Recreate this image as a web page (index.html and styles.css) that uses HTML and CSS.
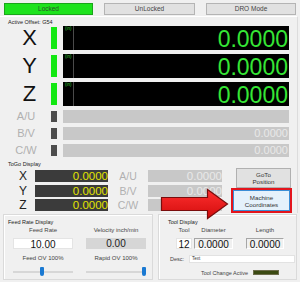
FILE: index.html
```html
<!DOCTYPE html>
<html>
<head>
<meta charset="utf-8">
<link rel="stylesheet" href="styles.css">
</head>
<body>
<div class="modes">
  <div class="mode locked">Locked</div>
  <div class="mode">UnLocked</div>
  <div class="mode">DRO Mode</div>
</div>
<div class="dro">
  <div class="cap">Active Offset: G54</div>
  <div class="axes">
    <div class="axis big"><span class="al">X</span><span class="led"></span><div class="disp"><span class="unit">(in)</span><span class="val">0.0000</span></div></div>
    <div class="axis big"><span class="al">Y</span><span class="led"></span><div class="disp"><span class="unit">(in)</span><span class="val">0.0000</span></div></div>
    <div class="axis big"><span class="al">Z</span><span class="led"></span><div class="disp"><span class="unit">(in)</span><span class="val">0.0000</span></div></div>
    <div class="axis small"><span class="al">A/U</span><span class="led"></span><div class="disp"><span class="val"></span></div></div>
    <div class="axis small"><span class="al">B/V</span><span class="led"></span><div class="disp"><span class="val">0.0000</span></div></div>
    <div class="axis small"><span class="al">C/W</span><span class="led"></span><div class="disp"><span class="val">0.0000</span></div></div>
  </div>
  <div class="togo">
    <div class="togo-left">
      <div class="cap">ToGo Display</div>
      <div class="tg-grid">
        <span class="tl">X</span><span class="tb">0.0000</span><span class="tl2">A/U</span><span class="tb2">0.0000</span>
        <span class="tl">Y</span><span class="tb">0.0000</span><span class="tl2">B/V</span><span class="tb2">0.0000</span>
        <span class="tl">Z</span><span class="tb">0.0000</span><span class="tl2">C/W</span><span class="tb2"></span>
      </div>
    </div>
    <div class="tg-btns">
      <div class="btn goto">GoTo<br>Position</div>
      <div class="hilite"><div class="btn mc">Machine<br>Coordinates</div></div>
    </div>
  </div>
</div>
<div class="bottom">
  <div class="grp feed">
    <div class="gcap">Feed Rate Display</div>
    <div class="fgrid">
      <span class="hd">Feed Rate</span><span class="hd">Velocity inch/min</span>
      <span class="box white">10.00</span><span class="box grey">0.00</span>
      <span class="ov">Feed OV 100%</span><span class="ov">Rapid OV 100%</span>
      <span class="slider"><span class="track"></span><span class="thumb" style="left:27px"></span></span>
      <span class="slider"><span class="track"></span><span class="thumb" style="left:56px"></span></span>
    </div>
  </div>
  <div class="grp tool">
    <div class="gcap">Tool Display</div>
    <div class="tgrid">
      <span class="hd">Tool</span><span class="hd">Diameter</span><span class="hd">Length</span>
      <span class="box white">12</span><span class="box sunk">0.0000</span><span class="box sunk">0.0000</span>
    </div>
    <div class="desc"><span class="dl">Desc:</span><span class="din">Text</span></div>
    <div class="tca"><span>Tool Change Active</span><span class="ind"></span></div>
  </div>
</div>
<svg class="arrow" width="72" height="34" viewBox="0 0 72 34">
  <defs>
    <linearGradient id="ag" x1="0" y1="0" x2="0" y2="1">
      <stop offset="0" stop-color="#ff3030"/>
      <stop offset="1" stop-color="#d20c0c"/>
    </linearGradient>
  </defs>
  <path d="M1.5 9.5 H47.5 V1.5 L67.5 16 L47.5 30.5 V22.5 H1.5 Z" fill="url(#ag)" stroke="#7a0c0c" stroke-width="1.2" stroke-linejoin="miter"/>
</svg>
</body>
</html>
```
FILE: styles.css
```css
* { box-sizing: border-box; margin: 0; padding: 0; }
html, body { width: 300px; height: 282px; overflow: hidden; }
body {
  background: #f0f0f0;
  font-family: "Liberation Sans", Arial, sans-serif;
  color: #333;
  position: relative;
}
.modes {
  display: grid;
  grid-template-columns: 89px 91px 90px;
  column-gap: 11px;
  padding: 3px 0 0 4px;
  height: 16px;
}
.mode {
  height: 12px;
  background: #e1e1e1;
  border: 1px solid #b4b4b4;
  font-size: 6.5px;
  line-height: 10px;
  text-align: center;
  color: #444;
}
.mode.locked { background: #1ee31e; border-color: #1aa51a; color: #2b4f2b; }

.dro {
  width: 298px;
  border-top: 1px solid #fff;
  border-right: 1px solid #dcdcdc;
  padding-top: 2px;
}
.cap { font-size: 5.5px; line-height: 7px; color: #222; padding-left: 8px; }

.axes { display: flex; flex-direction: column; gap: 4px; padding-left: 8px; }
.axis { display: flex; align-items: center; }
.axis .al { width: 43px; text-align: center; }
.led { width: 6px; margin-right: 6px; }
.disp { width: 226px; height: 100%; display: flex; }
.val { flex: 1; text-align: right; }

.big { height: 24px; }
.big .al { font-size: 22px; line-height: 24px; color: #111; }
.big .led { height: 22px; background: #12e812; }
.big .disp { background: #000; }
.unit {
  width: 11px;
  border-right: 1px solid #4a4a4a;
  font-size: 4.5px;
  line-height: 6px;
  color: #3c3;
  padding-left: 2px;
}
.big .val {
  font-size: 23px;
  line-height: 24px;
  color: #36e636;
  padding: 1px 1px 0 0;
}

.small { height: 13px; }
.small .al { font-size: 11px; line-height: 13px; color: #b0b0b0; padding-right: 7px; }
.small .led { height: 11px; background: #4c4c4c; }
.small .disp { background: #c8c8c8; }
.small .val { font-size: 11px; line-height: 13px; color: #e9e9e9; padding-right: 1px; }

.togo { display: flex; margin-top: 4px; }
.tg-grid {
  display: grid;
  grid-template-columns: 24px 73px 40px 74px;
  grid-auto-rows: 12px;
  row-gap: 2.5px;
  padding-left: 11px;
  margin-top: 2px;
}
.tl { font-size: 12px; line-height: 12px; text-align: center; color: #222; }
.tb {
  background: #3b3b3b;
  color: #e2e400;
  font-size: 11.5px;
  line-height: 12px;
  text-align: right;
}
.tl2 { font-size: 10.5px; line-height: 12px; text-align: center; color: #b0b0b0; }
.tb2 {
  background: #c8c8c8;
  color: #e9e9e9;
  font-size: 11.5px;
  line-height: 12px;
  text-align: right;
}
.tg-btns { margin-left: 9px; padding-top: 7px; display: flex; flex-direction: column; }
.btn {
  font-size: 6.2px;
  line-height: 7px;
  text-align: center;
  color: #333;
  display: flex;
  align-items: center;
  justify-content: center;
}
.goto {
  margin-left: 5px;
  width: 55px;
  height: 20px;
  background: #e1e1e1;
  border: 1px solid #b0b0b0;
}
.hilite {
  width: 61px;
  height: 25px;
  border: 2px solid #e3141c;
}
.mc {
  width: 57px;
  height: 21px;
  background: #e5f1fb;
  border: 1px solid #3c8ed6;
}

.bottom { display: flex; gap: 5px; padding: 1px 3px 0; }
.grp {
  height: 66px;
  border: 1px solid #dadada;
  padding-top: 4px;
  box-shadow: inset 1px 1px 0 #fff;
}
.feed { width: 150px; }
.tool { width: 139px; }
.gcap { font-size: 5.5px; line-height: 7px; color: #222; padding-left: 4px; }
.tool .gcap { padding-left: 9px; }
.hd { font-size: 6px; line-height: 8px; text-align: center; color: #444; white-space: nowrap; }
.box { height: 11px; font-size: 10px; line-height: 11px; text-align: center; color: #111; }
.white { background: #fff; border: 1px solid #e4e4e4; }
.grey { background: #d6d6d6; color: #222; }
.sunk { border: 1px solid; border-color: #a6a6a6 #fff #fff #a6a6a6; }

.fgrid {
  display: grid;
  grid-template-columns: 60px 60px;
  grid-template-rows: 8px 11px 7px 10px;
  column-gap: 13px;
  row-gap: 4px;
  padding-left: 9px;
}
.fgrid .ov { font-size: 6px; line-height: 7px; text-align: center; color: #444; margin-top: 2px; white-space: nowrap; }
.slider { position: relative; height: 10px; margin-top: 3px; }
.track { position: absolute; left: 0; right: 0; top: 4px; height: 2px; background: #d7d7d7; }
.thumb {
  position: absolute;
  top: 0;
  width: 4px;
  height: 9px;
  background: #1a79d2;
  border-radius: 1px 1px 2px 2px;
}

.tgrid {
  display: grid;
  grid-template-columns: 16px 39px 49px;
  grid-template-rows: 8px 11px;
  column-gap: 2px;
  row-gap: 4px;
  padding-left: 17px;
}
.tgrid .box:nth-child(6), .tgrid .hd:nth-child(3) { margin-left: 11px; }
.desc { display: flex; align-items: center; margin-top: 6px; padding-left: 11px; height: 8px; }
.dl { width: 19px; font-size: 5.5px; color: #444; }
.din {
  width: 106px;
  height: 8px;
  background: #fff;
  border: 1px solid #e2e2e2;
  font-size: 4.5px;
  line-height: 6px;
  padding-left: 2px;
  color: #333;
}
.tca {
  display: flex;
  justify-content: flex-end;
  align-items: center;
  gap: 5px;
  padding-right: 17px;
  margin-top: 6px;
  height: 7px;
  font-size: 5.5px;
  color: #444;
}
.ind { width: 26px; height: 5px; background: #3b4a12; border: 1px solid #6b6b4a; }

.arrow { position: absolute; left: 160px; top: 188px; }
```
